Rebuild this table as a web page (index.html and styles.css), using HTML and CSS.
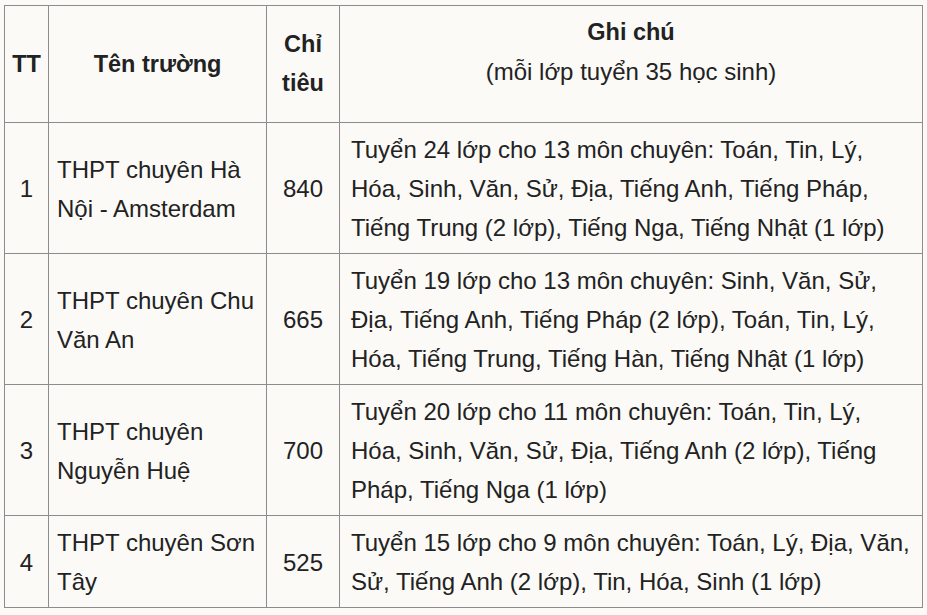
FILE: index.html
```html
<!DOCTYPE html>
<html lang="vi">
<head>
<meta charset="utf-8">
<title>Chỉ tiêu tuyển sinh</title>
<link rel="stylesheet" href="styles.css">
</head>
<body>
<table class="quota">
  <colgroup>
    <col class="c-tt">
    <col class="c-name">
    <col class="c-num">
    <col class="c-note">
  </colgroup>
  <thead>
    <tr>
      <th class="tt">TT</th>
      <th class="name-h">Tên trường</th>
      <th class="num">Chỉ<br>tiêu</th>
      <th class="note-h"><span class="note-title">Ghi chú</span><span class="note-sub">(mỗi lớp tuyển 35 học sinh)</span></th>
    </tr>
  </thead>
  <tbody>
    <tr>
      <td class="tt">1</td>
      <td class="name">THPT chuyên Hà Nội - Amsterdam</td>
      <td class="num">840</td>
      <td class="note">Tuyển 24 lớp cho 13 môn chuyên: Toán, Tin, Lý, Hóa, Sinh, Văn, Sử, Địa, Tiếng Anh, Tiếng Pháp, Tiếng Trung (2 lớp), Tiếng Nga, Tiếng Nhật (1 lớp)</td>
    </tr>
    <tr>
      <td class="tt">2</td>
      <td class="name">THPT chuyên Chu Văn An</td>
      <td class="num">665</td>
      <td class="note">Tuyển 19 lớp cho 13 môn chuyên: Sinh, Văn, Sử, Địa, Tiếng Anh, Tiếng Pháp (2 lớp), Toán, Tin, Lý, Hóa, Tiếng Trung, Tiếng Hàn, Tiếng Nhật (1 lớp)</td>
    </tr>
    <tr>
      <td class="tt">3</td>
      <td class="name">THPT chuyên Nguyễn Huệ</td>
      <td class="num">700</td>
      <td class="note">Tuyển 20 lớp cho 11 môn chuyên: Toán, Tin, Lý, Hóa, Sinh, Văn, Sử, Địa, Tiếng Anh (2 lớp), Tiếng Pháp, Tiếng Nga (1 lớp)</td>
    </tr>
    <tr>
      <td class="tt">4</td>
      <td class="name">THPT chuyên Sơn Tây</td>
      <td class="num">525</td>
      <td class="note">Tuyển 15 lớp cho 9 môn chuyên: Toán, Lý, Địa, Văn, Sử, Tiếng Anh (2 lớp), Tin, Hóa, Sinh (1 lớp)</td>
    </tr>
  </tbody>
</table>
</body>
</html>
```

FILE: styles.css
```css
html, body {
  margin: 0;
  padding: 0;
  background: #fbfaf7;
}

body {
  padding: 5px 0 0 4px;
  font-family: "Liberation Sans", Arial, sans-serif;
  font-size: 24px;
  line-height: 39px;
  color: #222222;
}

.quota {
  border-collapse: collapse;
  table-layout: fixed;
  width: 918px;
  background: #fbfaf7;
}

.c-tt { width: 44px; }
.c-name { width: 218px; }
.c-num { width: 73px; }
.c-note { width: 583px; }

.quota th,
.quota td {
  border: 1px solid #8c8c8c;
  padding: 7px 10px 6px;
  vertical-align: middle;
  text-align: left;
}

.quota th {
  font-size: 23.5px;
  font-weight: bold;
  text-align: center;
  padding-bottom: 7px;
}

.quota .tt,
.quota .num {
  text-align: center;
  padding-left: 2px;
  padding-right: 2px;
}

.quota .name {
  padding-left: 8px;
  padding-right: 6px;
}

.quota .note {
  padding-left: 11px;
  padding-right: 4px;
}

.quota .note-h {
  vertical-align: top;
  padding-bottom: 31px;
}

.note-title,
.note-sub {
  display: block;
  height: 39px;
}

.note-sub {
  font-size: 24px;
  font-weight: normal;
}
```
